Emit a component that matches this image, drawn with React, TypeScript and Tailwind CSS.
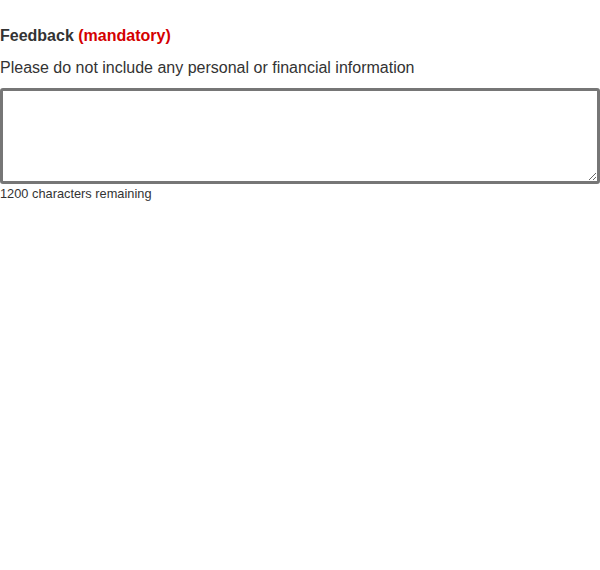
export default function App() {
  return (
    <div className="bg-white text-[#333333]" style={{ fontFamily: '"Liberation Sans", Arial, sans-serif' }}>
      <div className="pt-[25px]">
        <label className="block text-[16px] leading-[22px] font-bold">
          Feedback <span className="text-[#d40000]">(mandatory)</span>
        </label>
        <p className="mt-[10px] text-[16px] leading-[22px]">Please do not include any personal or financial information</p>
        <textarea className="mt-[9px] block w-full h-[96px] border-[3px] border-[#767676] rounded-[3px] resize-y outline-none"></textarea>
        <p className="text-[12.8px] leading-[20px]">1200 characters remaining</p>
      </div>
    </div>
  );
}
